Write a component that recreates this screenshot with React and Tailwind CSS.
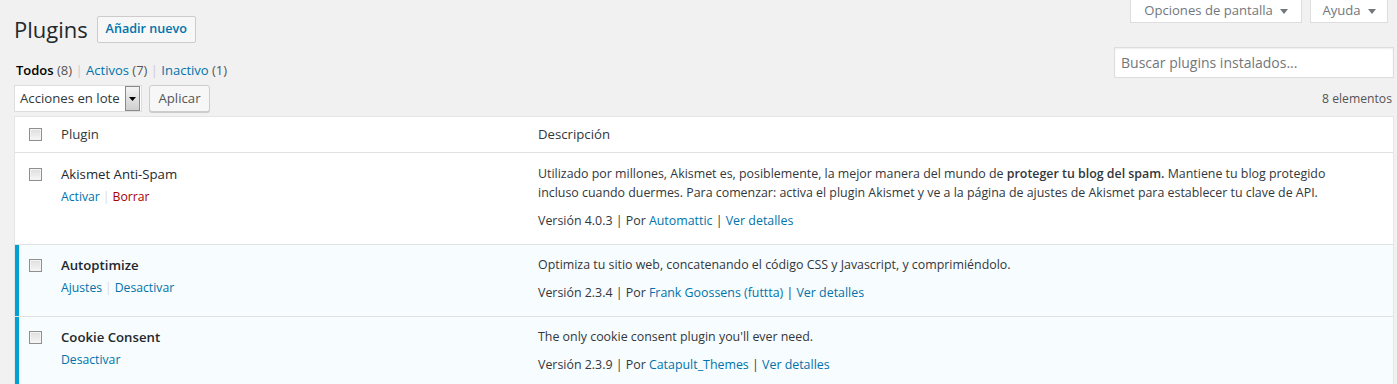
import React from "react";

const plugins = [
  {
    name: "Akismet Anti-Spam",
    active: false,
    actions: [
      { label: "Activar", tone: "link" },
      { label: "Borrar", tone: "delete" },
    ],
    desc: (
      <>
        Utilizado por millones, Akismet es, posiblemente, la mejor manera del mundo de{" "}
        <strong className="font-semibold">proteger tu blog del spam.</strong> Mantiene tu blog protegido incluso
        cuando duermes. Para comenzar: activa el plugin Akismet y ve a la página de ajustes de Akismet para
        establecer tu clave de API.
      </>
    ),
    version: "4.0.3",
    author: "Automattic",
  },
  {
    name: "Autoptimize",
    active: true,
    actions: [
      { label: "Ajustes", tone: "link" },
      { label: "Desactivar", tone: "link" },
    ],
    desc: "Optimiza tu sitio web, concatenando el código CSS y Javascript, y comprimiéndolo.",
    version: "2.3.4",
    author: "Frank Goossens (futtta)",
  },
  {
    name: "Cookie Consent",
    active: true,
    actions: [{ label: "Desactivar", tone: "link" }],
    desc: "The only cookie consent plugin you'll ever need.",
    version: "2.3.9",
    author: "Catapult_Themes",
  },
];

function Caret() {
  return (
    <svg width="8" height="5" viewBox="0 0 8 5" className="ml-[7px]">
      <path d="M0 0 L8 0 L4 5 Z" fill="#72777c" />
    </svg>
  );
}

function Checkbox() {
  return (
    <span className="block w-[13px] h-[13px] border border-[#8f8f8f] bg-gradient-to-b from-[#dedede] to-[#f6f6f6] shadow-[inset_0_0_0_1px_#f4f4f4]" />
  );
}

function PluginRow({ p }) {
  const bg = p.active ? "bg-[#f7fcfe]" : "bg-white";
  return (
    <div className={`flex border-b border-[#e1e1e1] ${bg}`}>
      <div
        className={`w-[36px] shrink-0 pt-[14px] ${
          p.active ? "border-l-4 border-[#00a0d2] pl-[10px]" : "pl-[14px]"
        }`}
      >
        <Checkbox />
      </div>
      <div className="w-[477px] shrink-0 pl-[10px] pt-[10px]">
        <div className={`text-[13.2px] leading-[20px] text-[#23282d] ${p.active ? "font-semibold" : ""}`}>
          {p.name}
        </div>
        <div className="mt-[2px] leading-[22px] flex items-center">
          {p.actions.map((a, i) => (
            <span key={a.label} className="flex items-center">
              {i > 0 && <span className="mx-[3px] text-[#ddd]">|</span>}
              <span className={a.tone === "delete" ? "text-[#a00]" : "text-[#0073aa]"}>{a.label}</span>
            </span>
          ))}
        </div>
      </div>
      <div className="flex-1 pl-[10px] pr-[26px] pt-[10px] pb-[14px] text-[12.4px] text-[#32373c]">
        <p className="leading-[19px]">{p.desc}</p>
        <p className="mt-[9px] leading-[19px]">
          Versión {p.version} | Por <span className="text-[#0073aa]">{p.author}</span> |{" "}
          <span className="text-[#0073aa]">Ver detalles</span>
        </p>
      </div>
    </div>
  );
}

export default function App() {
  return (
    <div className="min-h-screen w-full bg-[#f1f1f1] font-['Open_Sans',sans-serif] text-[12.2px] text-[#444] overflow-hidden">
      <div className="flex justify-between items-start pl-[14px] pr-[3px]">
        <div className="flex flex-col pb-[4px]">
          <div className="flex items-center mt-[16px] h-[27px]">
            <h1 className="text-[22px] leading-[27px] text-[#23282d]">Plugins</h1>
            <button className="ml-[9px] h-[27px] w-[99px] border border-[#ccc] rounded-[2px] bg-[#f7f7f7] text-[12.6px] text-[#0073aa] font-semibold">
              Añadir nuevo
            </button>
          </div>
          <div className="mt-[18px] h-[18px] leading-[18px] pl-[2px] text-[13px] text-[#555]">
            <span className="text-black font-semibold">Todos</span> (8) <span className="text-[#ccc]">|</span>{" "}
            <span className="text-[#0073aa]">Activos</span> (7) <span className="text-[#ccc]">|</span>{" "}
            <span className="text-[#0073aa]">Inactivo</span> (1)
          </div>
          <div className="mt-[6px] flex items-center gap-[7px]">
            <div className="flex items-center w-[128px] h-[27px] border border-[#ddd] bg-white pl-[5px] pr-[1px]">
              <span className="flex-1 whitespace-nowrap text-[13.2px] text-[#32373c]">Acciones en lote</span>
              <span className="flex shrink-0 items-center justify-center w-[15px] h-[25px] border border-[#8a8a8a] bg-gradient-to-b from-[#f4f4f4] to-[#cfcfcf]">
                <svg width="7" height="4" viewBox="0 0 7 4">
                  <path d="M0 0 L7 0 L3.5 4 Z" fill="#000" />
                </svg>
              </span>
            </div>
            <button className="h-[27px] w-[61px] border border-[#ccc] rounded-[3px] bg-[#f7f7f7] text-[13.2px] text-[#555] shadow-[0_1px_0_#ccc]">
              Aplicar
            </button>
          </div>
        </div>

        <div className="flex flex-col items-end w-[280px]">
          <div className="flex gap-[8px] pr-[6px]">
            <div className="flex items-center h-[23px] w-[172px] justify-center border border-t-0 border-[#ddd] bg-white text-[13.1px] text-[#72777c]">
              Opciones de pantalla <Caret />
            </div>
            <div className="flex items-center h-[23px] w-[78px] justify-center border border-t-0 border-[#ddd] bg-white text-[13.1px] text-[#72777c]">
              Ayuda <Caret />
            </div>
          </div>
          <div className="mt-[24px] w-[280px] h-[31px] flex items-center border border-[#ddd] bg-white shadow-[inset_0_1px_2px_rgba(0,0,0,0.07)] pl-[6px] pr-[1px] text-[14px] text-[#72777c]">
            Buscar plugins instalados...
          </div>
          <div className="mt-[12px] h-[18px] leading-[18px] pr-[2px] text-[#555]">8 elementos</div>
        </div>
      </div>

      <div className="ml-[14px] mr-[3px] border border-[#e5e5e5] bg-white">
        <div className="flex items-center h-[36px] border-b border-[#e1e1e1] text-[13.2px] text-[#32373c]">
          <div className="w-[36px] shrink-0 pl-[14px]">
            <Checkbox />
          </div>
          <div className="w-[477px] shrink-0 pl-[10px]">Plugin</div>
          <div className="flex-1 pl-[10px]">Descripción</div>
        </div>
        <div className="pt-px">
          {plugins.map((p) => (
            <PluginRow key={p.name} p={p} />
          ))}
        </div>
      </div>
    </div>
  );
}
